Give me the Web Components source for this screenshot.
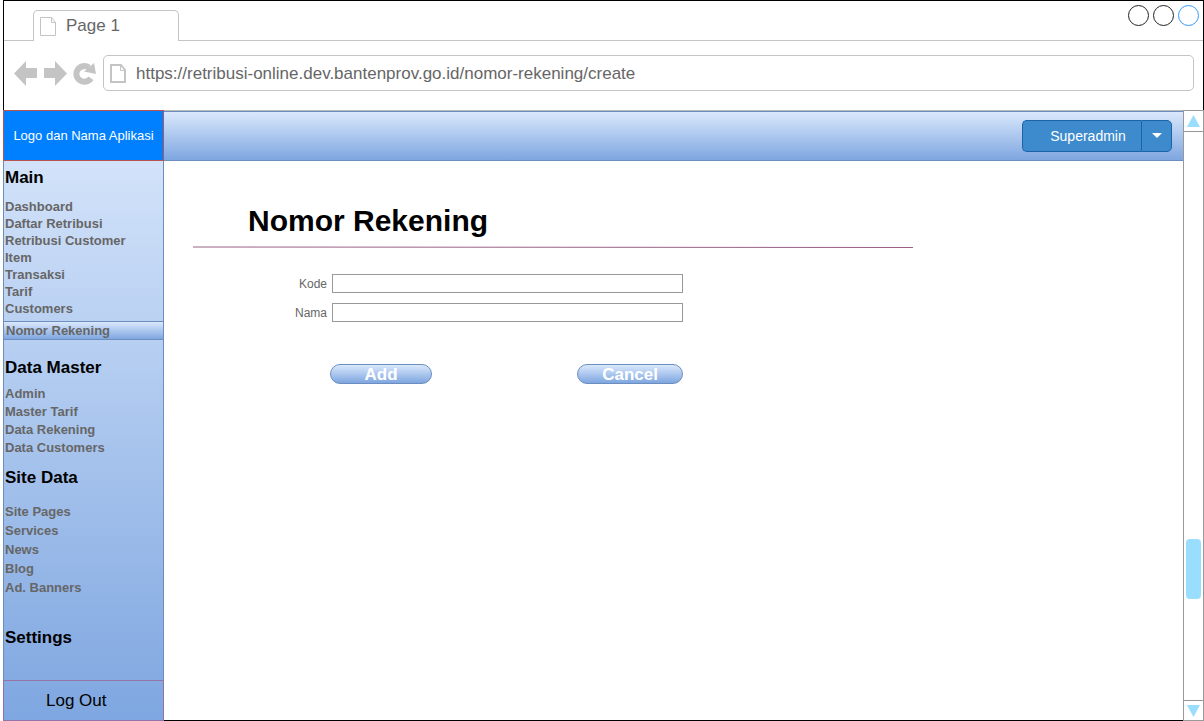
<!DOCTYPE html>
<html lang="id">
<head>
<meta charset="utf-8">
<title>Nomor Rekening</title>
<style>
  html, body { margin: 0; height: 100%; }
  body { background: #fff; font-family: "Liberation Sans", Arial, sans-serif; color: #000; }
</style>
</head>
<body>
<browser-window>
  <browser-bar slot="bar" label="Page 1" url="https://retribusi-online.dev.bantenprov.go.id/nomor-rekening/create"></browser-bar>
  <side-bar slot="side" brand="Logo dan Nama Aplikasi">
    <nav-group heading="Main" class="main">
      <nav-item>Dashboard</nav-item>
      <nav-item>Daftar Retribusi</nav-item>
      <nav-item>Retribusi Customer</nav-item>
      <nav-item>Item</nav-item>
      <nav-item>Transaksi</nav-item>
      <nav-item>Tarif</nav-item>
      <nav-item>Customers</nav-item>
      <nav-item current>Nomor Rekening</nav-item>
    </nav-group>
    <nav-group heading="Data Master" class="master">
      <nav-item>Admin</nav-item>
      <nav-item>Master Tarif</nav-item>
      <nav-item>Data Rekening</nav-item>
      <nav-item>Data Customers</nav-item>
    </nav-group>
    <nav-group heading="Site Data" class="site">
      <nav-item>Site Pages</nav-item>
      <nav-item>Services</nav-item>
      <nav-item>News</nav-item>
      <nav-item>Blog</nav-item>
      <nav-item>Ad. Banners</nav-item>
    </nav-group>
    <nav-group heading="Settings"></nav-group>
  </side-bar>
  <top-bar slot="top" user="Superadmin"></top-bar>
  <account-form heading="Nomor Rekening">
    <text-field label="Kode" name="kode"></text-field>
    <text-field label="Nama" name="nama"></text-field>
    <pill-button slot="actions">Add</pill-button>
    <pill-button slot="actions">Cancel</pill-button>
  </account-form>
  <scroll-rail slot="rail"></scroll-rail>
</browser-window>

<script>
const define = (name, render) => customElements.define(name, class extends HTMLElement {
  constructor() {
    super();
    this.attachShadow({ mode: 'open' }).innerHTML =
      '<style>*{box-sizing:border-box}:host{box-sizing:border-box}</style>' + render(this);
  }
});

define('browser-window', () => `
  <style>
    :host { display: flex; flex-direction: column; min-height: 100%; padding-left: 3px; }
    .app { flex: 1; display: grid; grid-template-columns: 161px 1fr 21px; }
    .page { display: flex; flex-direction: column; border: 1px solid #000; border-width: 1px 0; border-top-color: #bbb; }
    main { flex: 1; }
  </style>
  <slot name="bar"></slot>
  <div class="app">
    <slot name="side"></slot>
    <div class="page"><slot name="top"></slot><main><slot></slot></main></div>
    <slot name="rail"></slot>
  </div>`);

define('browser-bar', el => `
  <style>
    :host { display: block; height: 110px; border: 1px solid #000; border-bottom: 0; color: #666; font-size: 17px; }
    .strip { display: flex; height: 40px; }
    .gap { border-bottom: 1px solid #c4c4c4; width: 29px; }
    .tab { display: flex; align-items: center; gap: 10px; width: 146px; margin-top: 9px; padding: 0 0 0 6px;
      border: 1px solid #c4c4c4; border-bottom: 0; border-radius: 5px 5px 0 0; }
    .tab span { line-height: 30px; }
    .controls { flex: 1; display: flex; justify-content: flex-end; align-items: flex-start; gap: 4px;
      padding: 4px 4px 0 0; border-bottom: 1px solid #c4c4c4; }
    .controls button { width: 21px; height: 21px; padding: 0; border: 1px solid #222; border-radius: 50%; background: none; }
    .controls button:last-child { border-color: #3399ff; }
    .tools { display: flex; align-items: center; padding: 14px 9px 0 9px; }
    .tools > button { width: 30px; height: 30px; padding: 0; border: 0; background: none; display: flex; align-items: flex-end; }
    .address { flex: 1; display: flex; align-items: center; gap: 8px; height: 36px; padding-left: 5px;
      border: 1px solid #c4c4c4; border-radius: 5px; }
    input { flex: 1; min-width: 0; padding: 2px 0 0; border: 0; outline: 0; background: none; font: inherit; color: inherit; }
  </style>
  <div class="strip">
    <div class="gap"></div>
    <div class="tab">
      <svg width="16" height="19" fill="none" stroke="#c4c4c4"><path d="M.5.5h11l4 5v13H.5zM11.500.5v5h4"/></svg>
      <span>${el.getAttribute('label')}</span>
    </div>
    <div class="controls"><button aria-label="Minimize"></button><button aria-label="Maximize"></button><button aria-label="Close"></button></div>
  </div>
  <div class="tools">
    <button aria-label="Back"><svg width="30" height="28" fill="#c4c4c4"><path d="M1 13.500L13 1v7h11v10H13v8z"/></svg></button>
    <button aria-label="Forward"><svg width="30" height="28" fill="#c4c4c4"><path d="M24 13.500L12 1v7H1v10h11v8z"/></svg></button>
    <button aria-label="Reload"><svg width="30" height="28"><path d="M16 7.500A8 7.800 0 1 0 18 18.300" fill="none" stroke="#c4c4c4" stroke-width="6"/><path d="M21 3l2 11-12-2.500z" fill="#c4c4c4"/></svg></button>
    <label class="address">
      <svg width="19" height="21" fill="none" stroke="#c4c4c4" stroke-width="2"><path d="M2 2h10l4 5v12H2z"/><path d="M11.500 2v5.500H16" stroke-width="1"/></svg>
      <input aria-label="Address" value="${el.getAttribute('url')}">
    </label>
  </div>`);

define('side-bar', el => `
  <style>
    :host { display: flex; flex-direction: column; border: 1px solid #6c8ebf; border-width: 0 1px;
      background: linear-gradient(#dae8fc, #7ea6e0); }
    .brand { margin: 0 -1px 7px; height: 51px; border: 1px solid #b85450; background: #007fff;
      color: #fff; font-size: 13px; display: grid; place-items: center; }
    nav { flex: 1; }
    a { margin: 0 -1px; height: 41px; display: block; padding-left: 42px; border: 1px solid #9673a6;
      line-height: 39px; font-size: 17px; color: #000; text-decoration: none; }
    ::slotted(.main) { --row: 17px; --lead: 10px; --tail: 18px; }
    ::slotted(.master) { --row: 18px; --lead: 7px; --tail: 11px; }
    ::slotted(.site) { --row: 19px; --lead: 14px; --tail: 31px; }
  </style>
  <div class="brand">${el.getAttribute('brand')}</div>
  <nav><slot></slot></nav>
  <a href="#logout">Log Out</a>`);

define('nav-group', el => `
  <style>
    :host { display: block; padding-bottom: var(--tail, 0); }
    h2 { margin: 0 0 var(--lead, 0); padding-left: 1px; font-size: 17px; line-height: 20px; }
  </style>
  <h2>${el.getAttribute('heading')}</h2>
  <slot></slot>`);

define('nav-item', () => `
  <style>
    :host { display: block; font-size: 13px; font-weight: bold; line-height: var(--row); }
    a { display: block; padding-left: 1px; color: #666; text-decoration: none; }
    :host([current]) { margin-top: 4px; border: 1px solid #6c8ebf; border-width: 1px 0; background: linear-gradient(#dae8fc, #7ea6e0); }
    :host([current]) a { padding-left: 2px; }
  </style>
  <a href="#"><slot></slot></a>`);

define('top-bar', el => `
  <style>
    :host { display: flex; justify-content: flex-end; align-items: center; height: 50px; padding-right: 11px;
      border: 1px solid #6c8ebf; border-width: 1px 0; background: linear-gradient(#dae8fc, #7ea6e0); }
    .split { display: flex; height: 32px; }
    button { padding: 0; border: 1px solid #1a64a5; background: #3d8bcd; color: #fff; font: 14px "Liberation Sans", Arial, sans-serif; }
    .name { width: 119px; padding-left: 12px; border-right: 0; border-radius: 5px 0 0 5px; }
    .more { width: 31px; border-radius: 0 5px 5px 0; display: grid; place-items: center; }
  </style>
  <div class="split">
    <button class="name">${el.getAttribute('user')}</button>
    <button class="more" aria-label="Menu"><svg width="10" height="6" fill="#fff"><path d="M0 0h10L5 5z"/></svg></button>
  </div>`);

define('account-form', el => `
  <style>
    :host { display: block; max-width: 749px; padding: 40px 0 0 29px; }
    h1 { margin: 0; padding-left: 55px; font-size: 30px; line-height: 40px; }
    svg { display: block; width: 100%; height: 3px; margin-top: 4px; }
    form { display: block; width: 490px; margin-top: 26px; }
    .fields { display: grid; gap: 10px; }
    .actions { display: flex; justify-content: space-between; padding-left: 137px; margin-top: 42px; }
  </style>
  <h1>${el.getAttribute('heading')}</h1>
  <svg viewBox="0 0 720 3" preserveAspectRatio="none"><path d="M0 2L720 2.500" stroke="#996185"/></svg>
  <form>
    <div class="fields"><slot></slot></div>
    <div class="actions"><slot name="actions"></slot></div>
  </form>`);

define('text-field', el => `
  <style>
    :host { display: block; }
    label { display: grid; grid-template-columns: 134px 1fr; gap: 5px; align-items: center; font-size: 12px; color: #666; text-align: right; }
    input { width: 100%; height: 19px; margin: 0; padding: 0 4px; border: 1px solid #999; background: #fff; font: inherit; }
  </style>
  <label>${el.getAttribute('label')}<input name="${el.getAttribute('name')}"></label>`);

define('pill-button', () => `
  <style>
    :host { display: block; }
    button { display: block; height: 20px; padding: 1px 24px 0; min-width: 102px; border: 1px solid #6c8ebf; border-radius: 10px;
      background: linear-gradient(#dae8fc, #7ea6e0); color: #fff; font: bold 17px/18px "Liberation Sans", Arial, sans-serif; }
  </style>
  <button type="button"><slot></slot></button>`);

define('scroll-rail', () => `
  <style>
    :host { display: flex; flex-direction: column; border: 1px solid #999; }
    button { height: 20px; padding: 0; border: 0; background: none; display: grid; place-items: center; }
    button:last-child { height: 19px; }
    .track { flex: 1; display: flex; flex-direction: column; align-items: center; border: 1px solid #999; border-width: 1px 0; }
    .before { flex: 407; }
    .thumb { width: 15px; height: 60px; border-radius: 4px; background: #99ddff; }
    .after { flex: 101; }
  </style>
  <button aria-label="Scroll up"><svg width="13" height="12" fill="#99ddff"><path d="M6.500 0L13 12H0z"/></svg></button>
  <div class="track"><div class="before"></div><div class="thumb"></div><div class="after"></div></div>
  <button aria-label="Scroll down"><svg width="13" height="12" fill="#99ddff"><path d="M0 0h13L6.500 12z"/></svg></button>`);
</script>
</body>
</html>
